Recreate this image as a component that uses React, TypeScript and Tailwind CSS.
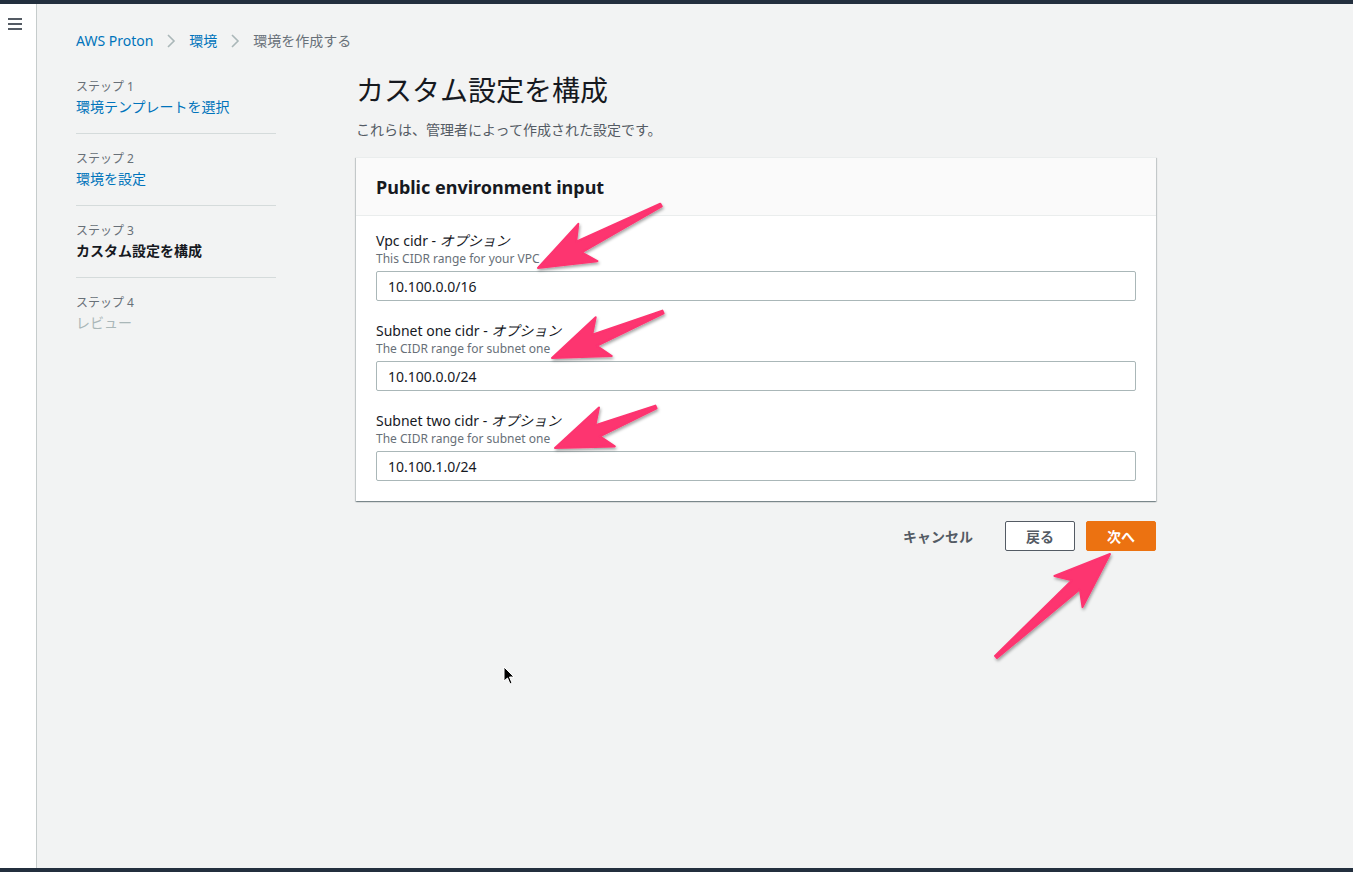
import React from "react";

const font = {
  fontFamily: '"Noto Sans", "Noto Sans CJK JP", sans-serif',
};

const steps = [
  { label: "ステップ 1", name: "環境テンプレートを選択", state: "done" },
  { label: "ステップ 2", name: "環境を設定", state: "done" },
  { label: "ステップ 3", name: "カスタム設定を構成", state: "current" },
  { label: "ステップ 4", name: "レビュー", state: "todo" },
];

const fields = [
  { name: "Vpc cidr", desc: "This CIDR range for your VPC", value: "10.100.0.0/16" },
  { name: "Subnet one cidr", desc: "The CIDR range for subnet one", value: "10.100.0.0/24" },
  { name: "Subnet two cidr", desc: "The CIDR range for subnet one", value: "10.100.1.0/24" },
];

// annotation arrows: tail -> tip, in page coordinates
const arrows = [
  { x1: 661, y1: 205, x2: 538, y2: 268 },
  { x1: 663, y1: 312, x2: 552, y2: 358 },
  { x1: 656, y1: 407, x2: 555, y2: 448 },
  { x1: 996, y1: 657, x2: 1110, y2: 554 },
];

const arrowPoints = ({ x1, y1, x2, y2 }: { x1: number; y1: number; x2: number; y2: number }) => {
  const dx = x2 - x1;
  const dy = y2 - y1;
  const L = Math.hypot(dx, dy);
  const ux = dx / L;
  const uy = dy / L;
  const nx = -uy;
  const ny = ux;
  const H = 46;
  const local: [number, number][] = [
    [0, -1.5],
    [L - H, -6],
    [L - H - 10, -21],
    [L, 0],
    [L - H - 10, 21],
    [L - H, 6],
    [0, 1.5],
  ];
  return local
    .map(([a, b]) => `${(x1 + ux * a + nx * b).toFixed(1)},${(y1 + uy * a + ny * b).toFixed(1)}`)
    .join(" ");
};

const Chevron = () => (
  <svg width="16" height="16" viewBox="0 0 16 16" className="mx-[10px]">
    <path d="M5 2l6 6-6 6" fill="none" stroke="#aab7b8" strokeWidth="1.6" />
  </svg>
);

export default function App() {
  return (
    <div style={font} className="relative flex h-[872px] w-[1353px] flex-col overflow-hidden bg-[#f2f3f3]">
      <div className="h-[4px] bg-[#232f3e]" />
      <div className="flex flex-1">
        <aside className="w-[37px] shrink-0 border-r border-[#c6cccc] bg-white">
          <div className="ml-[8px] mt-[14px] flex w-[14px] flex-col gap-[3px]">
            <span className="h-[2px] bg-[#545b64]" />
            <span className="h-[2px] bg-[#545b64]" />
            <span className="h-[2px] bg-[#545b64]" />
          </div>
        </aside>

        <main className="flex-1 pl-[39px] pt-[27px]">
          <nav className="flex h-[20px] items-center text-[14px] leading-[20px]">
            <a className="text-[#0073bb]">AWS Proton</a>
            <Chevron />
            <a className="text-[#0073bb]">環境</a>
            <Chevron />
            <span className="text-[#687078]">環境を作成する</span>
          </nav>

          <div className="mt-[21px] flex">
            <ol className="w-[200px] shrink-0 pt-[7px]">
              {steps.map((s, idx) => (
                <li
                  key={idx}
                  className={
                    "pb-[16px] " +
                    (idx > 0 ? "pt-[17px] " : "") +
                    (idx < steps.length - 1 ? "border-b border-[#d5dbdb]" : "")
                  }
                >
                  <div className="text-[12px] leading-[16px] text-[#687078]">{s.label}</div>
                  <div
                    className={
                      "mt-[2px] text-[14px] leading-[20px] " +
                      (s.state === "done"
                        ? "text-[#0073bb]"
                        : s.state === "current"
                        ? "font-bold text-[#16191f]"
                        : "text-[#aab7b8]")
                    }
                  >
                    {s.name}
                  </div>
                </li>
              ))}
            </ol>

            <section className="ml-[80px] w-[800px]">
              <h1 className="text-[28px] font-normal leading-[36px] text-[#16191f]">カスタム設定を構成</h1>
              <p className="mt-[12px] text-[14px] leading-[20px] text-[#545b64]">
                これらは、管理者によって作成された設定です。
              </p>

              <div className="mt-[17px] border-t border-[#eaeded] bg-white shadow-[0_1px_1px_0_rgba(0,28,36,0.3),1px_1px_1px_0_rgba(0,28,36,0.15),-1px_1px_1px_0_rgba(0,28,36,0.15)]">
                <div className="flex h-[58px] items-center border-b border-[#eaeded] bg-[#fafafa] px-[20px]">
                  <h2 className="text-[18px] font-bold leading-[22px] text-[#16191f]">Public environment input</h2>
                </div>
                <div className="flex flex-col gap-[20px] px-[20px] pb-[20px] pt-[15px]">
                  {fields.map((f, idx) => (
                    <div key={idx}>
                      <div className="text-[14px] leading-[20px] text-[#16191f]">
                        {f.name} - <i className="italic">オプション</i>
                      </div>
                      <div className="text-[12px] leading-[16px] text-[#687078]">{f.desc}</div>
                      <input
                        readOnly
                        value={f.value}
                        className="mt-[4px] box-border h-[30px] w-full rounded-[2px] border border-[#aab7b8] px-[11px] text-[14px] text-[#16191f] outline-none"
                      />
                    </div>
                  ))}
                </div>
              </div>

              <div className="mt-[20px] flex items-center justify-end">
                <button className="mr-[32px] text-[14px] font-bold text-[#545b64]">キャンセル</button>
                <button className="h-[30px] w-[70px] rounded-[2px] border border-[#545b64] bg-white text-[14px] font-bold text-[#545b64]">
                  戻る
                </button>
                <button className="ml-[11px] h-[30px] w-[70px] rounded-[2px] border border-[#ec7211] bg-[#ec7211] text-[14px] font-bold text-white">
                  次へ
                </button>
              </div>
            </section>
          </div>
        </main>
      </div>
      <div className="h-[4px] bg-[#232f3e]" />

      {/* annotation overlay */}
      <svg className="pointer-events-none absolute left-0 top-0" width="1353" height="872">
        <defs>
          <filter id="sh" x="-20%" y="-20%" width="140%" height="140%">
            <feDropShadow dx="1" dy="2" stdDeviation="1.5" floodColor="#000" floodOpacity="0.35" />
          </filter>
        </defs>
        {arrows.map((a, idx) => (
          <polygon
            key={idx}
            points={arrowPoints(a)}
            fill="#fd3470"
            stroke="#fd3470"
            strokeWidth="2"
            strokeLinejoin="round"
            filter="url(#sh)"
          />
        ))}
        <path
          d="M504 667 L504 681 L507.5 678 L510 684 L512 683 L509.5 677 L514 677 Z"
          fill="#000"
          stroke="#fff"
          strokeWidth="1"
        />
      </svg>
    </div>
  );
}
